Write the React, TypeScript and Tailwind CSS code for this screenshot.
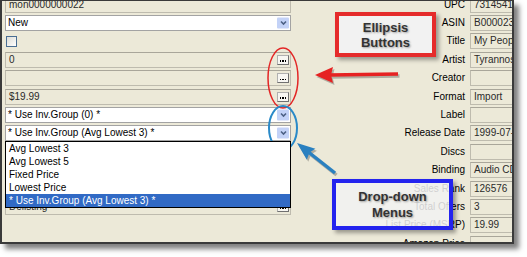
import React from "react";

const FONT = { fontFamily: '"Liberation Sans", Arial, sans-serif' };

function EllipsisBtn() {
  return (
    <div className="absolute right-[1px] top-1/2 -translate-y-1/2 w-[12px] h-[10px] bg-[#F7F6F2] border border-[#B0B0B0] border-b-[#707070] border-r-[#707070] flex items-end justify-center gap-[1px] pb-[2px]">
      <span className="w-[1.5px] h-[1.5px] bg-black" />
      <span className="w-[1.5px] h-[1.5px] bg-black" />
      <span className="w-[1.5px] h-[1.5px] bg-black" />
    </div>
  );
}

function ArrowBtn() {
  return (
    <div className="absolute right-[1px] top-1/2 -translate-y-1/2 w-[12px] h-[11px] bg-[#C3D2F7] rounded-[1px] flex items-center justify-center">
      <svg width="7" height="5" viewBox="0 0 7 5">
        <path d="M1 1 L3.5 3.5 L6 1" stroke="#4D6185" strokeWidth="1.6" fill="none" />
      </svg>
    </div>
  );
}

function Row({ children }: { children?: React.ReactNode }) {
  return <div className="h-[18.42px] flex items-center relative">{children}</div>;
}

function GrayField({ text, ellipsis }: { text: string; ellipsis?: boolean }) {
  return (
    <div className="relative w-full h-[16px] border border-[#BEBBAE] border-t-[#A9A69A] bg-[#ECE9D8] flex items-center pl-[3px] text-[10px] text-[#2A2A2A] leading-none overflow-hidden">
      {text}
      {ellipsis && <EllipsisBtn />}
    </div>
  );
}

function SelectField({ text }: { text: string }) {
  return (
    <div className="relative w-full h-[16px] border border-[#A3A3A3] bg-white flex items-center pl-[2px] text-[10px] text-black leading-none">
      {text}
      <ArrowBtn />
    </div>
  );
}

const rightRows: [string, string][] = [
  ["UPC", "7314541"],
  ["ASIN", "B000023"],
  ["Title", "My Peop"],
  ["Artist", "Tyrannos"],
  ["Creator", ""],
  ["Format", "Import"],
  ["Label", ""],
  ["Release Date", "1999-07-"],
  ["Discs", ""],
  ["Binding", "Audio CD"],
  ["Sales Rank", "126576"],
  ["Total Offers", "3"],
  ["List Price (MSRP)", "19.99"],
  ["Amazon Price", ""],
];

const listItems = ["Avg Lowest 3", "Avg Lowest 5", "Fixed Price", "Lowest Price"];

export default function App() {
  return (
    <div className="w-[527px] h-[257px] bg-white relative overflow-hidden" style={FONT}>
      <div className="w-[514px] h-[244px] bg-[#ECE9D8] border-2 border-t border-[#3A3A3A] shadow-[5px_5px_5px_rgba(0,0,0,0.5)] overflow-hidden flex">
        {/* left column */}
        <div className="w-[289px] shrink-0 pl-[3px] -mt-[5.6px] flex flex-col">
          <Row>
            <GrayField text="mon0000000022" />
          </Row>
          <Row>
            <SelectField text="New" />
          </Row>
          <Row>
            <div className="ml-[1px] w-[11px] h-[11px] border border-[#4A6E93] bg-gradient-to-br from-[#DCDCD6] to-white" />
          </Row>
          <Row>
            <GrayField text="0" ellipsis />
          </Row>
          <Row>
            <GrayField text="" ellipsis />
          </Row>
          <Row>
            <GrayField text="$19.99" ellipsis />
          </Row>
          <Row>
            <SelectField text="* Use Inv.Group (0) *" />
          </Row>
          <Row>
            <SelectField text="* Use Inv.Group (Avg Lowest 3) *" />
            <div className="absolute left-0 right-0 top-[17px] z-10 bg-white border border-black flex flex-col">
              {listItems.map((t) => (
                <div key={t} className="h-[13px] flex items-center pl-[3px] text-[10px] leading-none text-black">
                  {t}
                </div>
              ))}
              <div className="h-[13px] flex items-center pl-[3px] text-[10px] leading-none text-white bg-[#316AC5]">
                * Use Inv.Group (Avg Lowest 3) *
              </div>
            </div>
          </Row>
          <Row />
          <Row />
          <Row />
          <Row>
            <GrayField text="Delisting" ellipsis />
          </Row>
        </div>
        {/* right column */}
        <div className="flex-1 min-w-0 overflow-hidden -mt-[5.6px] flex flex-col">
          {rightRows.map(([label, value]) => (
            <div key={label} className="h-[18.42px] flex items-center shrink-0">
              <div className="w-[179px] shrink-0 pr-[5px] text-right text-[10px] leading-none text-black">
                {label}
              </div>
              <div className="w-[60px] shrink-0 h-[16px] border border-[#BEBBAE] border-t-[#A9A69A] flex items-center pl-[3px] text-[10px] leading-none text-[#2A2A2A] whitespace-nowrap">
                {value}
              </div>
            </div>
          ))}
        </div>
      </div>

      {/* callout: Ellipsis Buttons */}
      <div className="absolute left-[335px] top-[12px] w-[101px] h-[45px] border-[4px] border-[#E52B2B] bg-[#F2F2F2] shadow-[3px_3px_4px_rgba(0,0,0,0.35)] flex flex-col items-center justify-center text-[13px] font-bold leading-[15px] text-[#333] [text-shadow:1px_1px_2px_rgba(0,0,0,0.35)]">
        <span>Ellipsis</span>
        <span>Buttons</span>
      </div>

      {/* callout: Drop-down Menus */}
      <div className="absolute left-[332px] top-[179px] w-[121px] h-[51px] border-[4px] border-[#2323EE] bg-[rgba(242,242,242,0.85)] shadow-[3px_3px_4px_rgba(0,0,0,0.35)] flex flex-col items-center justify-center text-[13px] font-bold leading-[16px] text-[#333] [text-shadow:1px_1px_2px_rgba(0,0,0,0.35)]">
        <span>Drop-down</span>
        <span>Menus</span>
      </div>

      {/* annotation strokes */}
      <svg className="absolute left-0 top-0 pointer-events-none" width="527" height="257" viewBox="0 0 527 257">
        <ellipse cx="283" cy="78" rx="15" ry="30" fill="none" stroke="#E32626" strokeWidth="1.5" />
        <ellipse cx="283" cy="128" rx="14" ry="22" fill="none" stroke="#2A8AC8" strokeWidth="2" />
        <g opacity="0.25" transform="translate(1.5,2)">
          <line x1="329" y1="75" x2="398" y2="74" stroke="#000" strokeWidth="3.5" />
          <polygon points="315,75 333,67 331,75 333,83" fill="#000" />
        </g>
        <line x1="329" y1="75" x2="398" y2="74" stroke="#E62222" strokeWidth="3.5" />
        <polygon points="315,75 333,67 331,75 333,83" fill="#E62222" />
        <g opacity="0.25" transform="translate(1.5,2)">
          <line x1="309" y1="152.5" x2="335" y2="173" stroke="#000" strokeWidth="3.5" />
          <polygon points="297,143 315.4,148.7 309.5,152.5 306.8,159.7" fill="#000" />
        </g>
        <line x1="309" y1="152.5" x2="335" y2="173" stroke="#2A80C0" strokeWidth="3.5" />
        <polygon points="297,143 315.4,148.7 309.5,152.5 306.8,159.7" fill="#2A80C0" />
      </svg>
    </div>
  );
}
